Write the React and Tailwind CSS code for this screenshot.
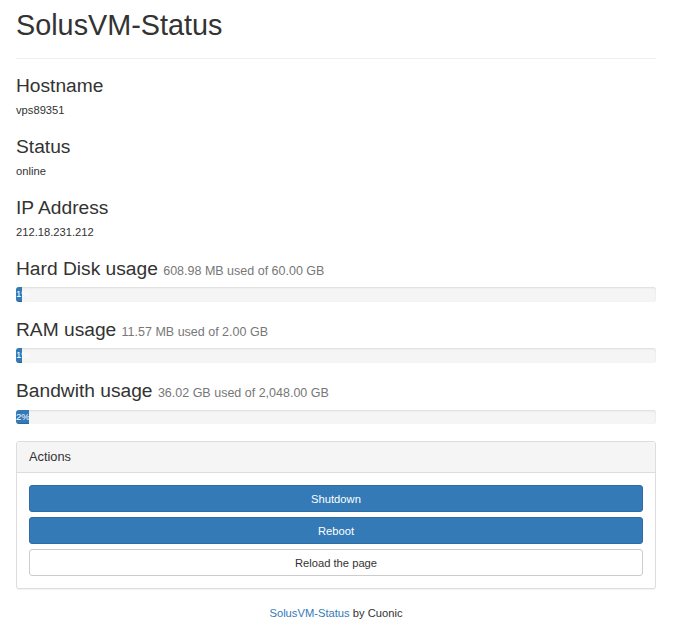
import React from "react";

const info = [
    { label: "Hostname", value: "vps89351" },
    { label: "Status", value: "online" },
    { label: "IP Address", value: "212.18.231.212" },
];

const usage = [
    { label: "Hard Disk usage", detail: "608.98 MB used of 60.00 GB", percent: 1 },
    { label: "RAM usage", detail: "11.57 MB used of 2.00 GB", percent: 1 },
    { label: "Bandwith usage", detail: "36.02 GB used of 2,048.00 GB", percent: 2 },
];

const Progress = ({ percent }) => (
    <div className="mt-[8.4px] h-[14.4px] w-full overflow-hidden rounded-[3px] bg-[#f5f5f5] shadow-[inset_0_1px_2px_rgba(0,0,0,0.1)]">
        <div
            className="h-full whitespace-nowrap bg-[#337ab7] text-center text-[9.6px] leading-[14.4px] text-white shadow-[inset_0_-1px_0_rgba(0,0,0,0.15)]"
            style={{ width: `${percent}%` }}
        >
            {percent}%
        </div>
    </div>
);

export default function App() {
    return (
        <div
            className="ml-[16px] w-[640px] bg-white text-[11.2px] leading-[16px] text-[#333]"
            style={{ fontFamily: '"Liberation Sans", Arial, Helvetica, sans-serif' }}
        >
            {/* Page header */}
            <div className="border-b border-[#eee] pt-[9px] pb-[17px]">
                <h1 className="text-[28.8px] leading-[32px] font-normal">SolusVM-Status</h1>
            </div>

            <div className="pt-[16px]">
                {info.map((item) => (
                    <div key={item.label} className="mb-[18px]">
                        <h3 className="text-[19.2px] leading-[21px] font-normal">{item.label}</h3>
                        <p className="mt-[6px]">{item.value}</p>
                    </div>
                ))}

                {usage.map((item) => (
                    <div key={item.label} className="mb-[17.3px]">
                        <h3 className="h-[21px] text-[19.2px] leading-[21px] font-normal">
                            {item.label}{" "}
                            <small className="text-[12.5px] leading-none text-[#777]">{item.detail}</small>
                        </h3>
                        <Progress percent={item.percent} />
                    </div>
                ))}

                {/* Actions panel */}
                <div className="rounded-[3px] border border-[#ddd] shadow-[0_1px_1px_rgba(0,0,0,0.05)]">
                    <div className="rounded-t-[3px] border-b border-[#ddd] bg-[#f5f5f5] px-[12px] py-[8px]">
                        <h3 className="text-[12.8px] leading-[14px] font-normal">Actions</h3>
                    </div>
                    <div className="flex flex-col gap-[5px] p-[12px]">
                        <button className="h-[27px] rounded-[3px] border border-[#2e6da4] bg-[#337ab7] text-white">
                            Shutdown
                        </button>
                        <button className="h-[27px] rounded-[3px] border border-[#2e6da4] bg-[#337ab7] text-white">
                            Reboot
                        </button>
                        <button className="h-[27px] rounded-[3px] border border-[#ccc] bg-white text-[#333]">
                            Reload the page
                        </button>
                    </div>
                </div>

                <p className="mt-[16px] pb-[13px] text-center">
                    <a href="#" className="text-[#337ab7]">SolusVM-Status</a> by Cuonic
                </p>
            </div>
        </div>
    );
}
